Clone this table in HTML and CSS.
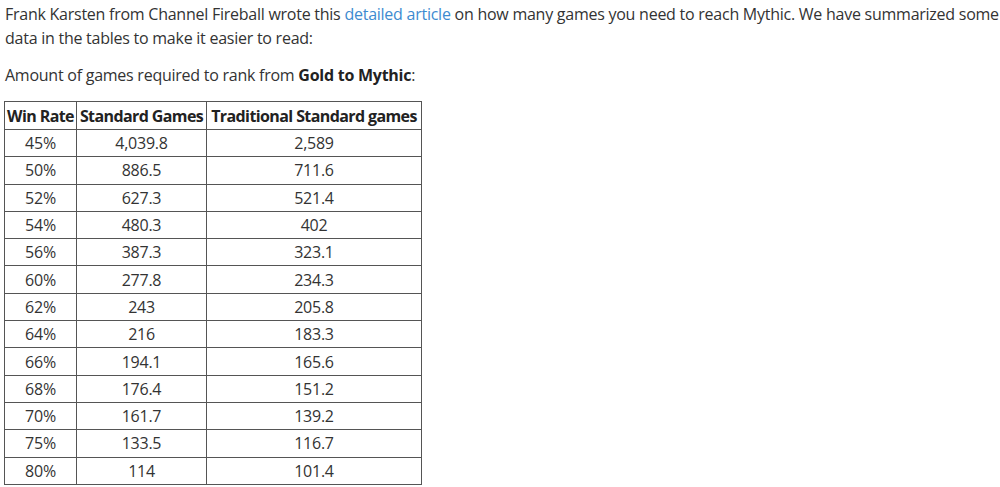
FILE: index.html
```html
<!DOCTYPE html>
<html>
<head>
<meta charset="utf-8">
<link rel="stylesheet" href="styles.css">
</head>
<body>
<div class="content">
<p>Frank Karsten from Channel Fireball wrote this <a href="#">detailed article</a> on how many games you need to reach Mythic. We have summarized some data in the tables to make it easier to read:</p>
<p class="lead">Amount of games required to rank from <strong>Gold to Mythic</strong>:</p>
<table class="games">
<thead>
<tr><th class="c1">Win Rate</th><th class="c2">Standard Games</th><th class="c3">Traditional Standard games</th></tr>
</thead>
<tbody>
<tr><td>45%</td><td>4,039.8</td><td>2,589</td></tr>
<tr><td>50%</td><td>886.5</td><td>711.6</td></tr>
<tr><td>52%</td><td>627.3</td><td>521.4</td></tr>
<tr><td>54%</td><td>480.3</td><td>402</td></tr>
<tr><td>56%</td><td>387.3</td><td>323.1</td></tr>
<tr><td>60%</td><td>277.8</td><td>234.3</td></tr>
<tr><td>62%</td><td>243</td><td>205.8</td></tr>
<tr><td>64%</td><td>216</td><td>183.3</td></tr>
<tr><td>66%</td><td>194.1</td><td>165.6</td></tr>
<tr><td>68%</td><td>176.4</td><td>151.2</td></tr>
<tr><td>70%</td><td>161.7</td><td>139.2</td></tr>
<tr><td>75%</td><td>133.5</td><td>116.7</td></tr>
<tr><td>80%</td><td>114</td><td>101.4</td></tr>
</tbody>
</table>
</div>
</body>
</html>
```
FILE: styles.css
```css
html, body {
  margin: 0;
  padding: 0;
  background: #fff;
}
body {
  font-family: "Open Sans", "Noto Sans", sans-serif;
  font-size: 16px;
  letter-spacing: -0.25px;
  color: #333;
  line-height: 24px;
}
.content {
  padding: 2px 0 0 5px;
}
p {
  margin: 0 0 13px 0;
}
a {
  color: #3d8bd0;
  text-decoration: none;
}
strong {
  font-weight: 700;
  color: #222;
}
.lead {
  margin-bottom: 14px;
}
.games {
  border-collapse: collapse;
  margin-left: -1px;
}
.games th, .games td {
  border: 1px solid #555;
  padding: 0;
  height: 26.3px;
  text-align: center;
  white-space: nowrap;
  line-height: 20px;
}
.games th {
  font-weight: 700;
  color: #222;
  height: 27px;
  letter-spacing: -0.6px;
}
.c1 { width: 71px; }
.c2 { width: 129px; }
.c3 { width: 214px; }
```
